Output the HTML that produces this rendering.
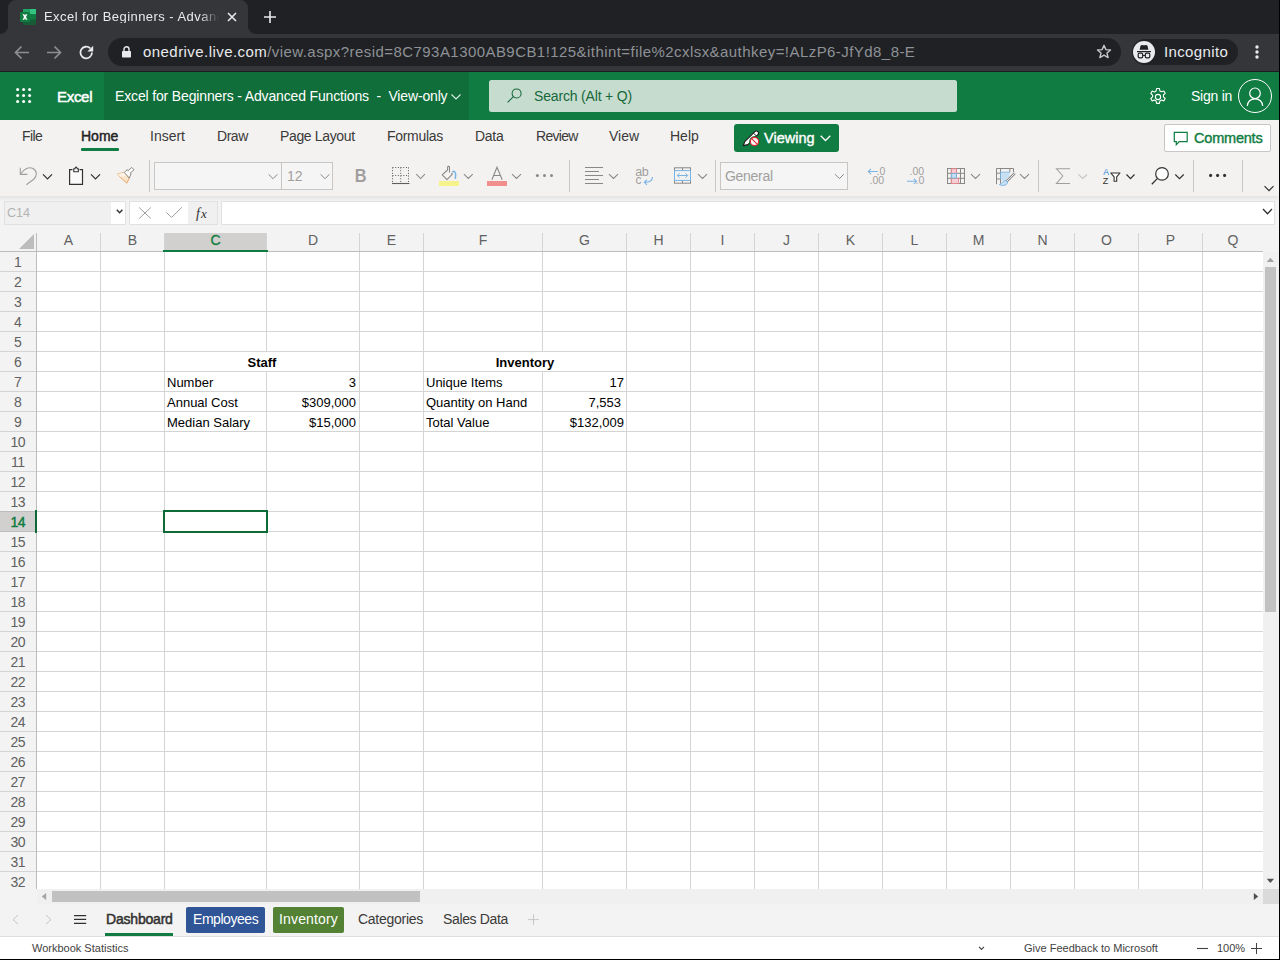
<!DOCTYPE html>
<html><head><meta charset="utf-8">
<style>
*{box-sizing:border-box;margin:0;padding:0}
html,body{width:1280px;height:960px;overflow:hidden;background:#fff}
body{position:relative;font-family:"Liberation Sans",sans-serif}
.a{position:absolute}
.t{position:absolute;white-space:nowrap;line-height:1}
svg{position:absolute;overflow:visible}
</style></head><body>

<!-- ============ CHROME ============ -->
<div class="a" style="left:0;top:0;width:1280px;height:72px;background:#202124"></div>
<!-- active tab -->
<div class="a" style="left:8px;top:0;width:240px;height:36px;background:#35363a;border-radius:8px 8px 0 0"></div>
<div class="a" style="left:0;top:26px;width:8px;height:8px;background:radial-gradient(circle at 0 0,#202124 7.5px,#35363a 8.5px)"></div>
<div class="a" style="left:248px;top:26px;width:8px;height:8px;background:radial-gradient(circle at 100% 0,#202124 7.5px,#35363a 8.5px)"></div>
<!-- toolbar -->
<div class="a" style="left:0;top:34px;width:1280px;height:37px;background:#35363a"></div>
<div class="a" style="left:0;top:71px;width:1280px;height:1px;background:#1d1e21"></div>
<!-- favicon -->
<svg style="left:20px;top:9px" width="17" height="16" viewBox="0 0 17 16">
<rect x="3" y="0" width="13" height="16" rx="1" fill="#185c37"/>
<rect x="3" y="0" width="13" height="5.3" fill="#21a366"/>
<rect x="10" y="0" width="6" height="5.3" fill="#33c481"/>
<rect x="3" y="5.3" width="13" height="5.3" fill="#107c41"/>
<rect x="0" y="3" width="10" height="10" rx="1" fill="#107c41"/>
<path d="M2.6 5.2 L4.3 5.2 L5 6.6 L5.7 5.2 L7.4 5.2 L6 8 L7.5 10.8 L5.8 10.8 L5 9.3 L4.2 10.8 L2.5 10.8 L4 8 Z" fill="#fff"/>
</svg>
<div class="t" style="left:44px;top:10px;font-size:13px;letter-spacing:0.45px;color:#e8eaed;width:176px;overflow:hidden;-webkit-mask-image:linear-gradient(90deg,#000 156px,transparent 175px)">Excel for Beginners - Advanced Functions</div>
<svg style="left:227px;top:12px" width="10" height="10" viewBox="0 0 10 10"><path d="M1 1L9 9M9 1L1 9" stroke="#e8eaed" stroke-width="1.6"/></svg>
<svg style="left:264px;top:11px" width="12" height="12" viewBox="0 0 12 12"><path d="M6 0V12M0 6H12" stroke="#e8eaed" stroke-width="1.6"/></svg>
<!-- nav -->
<svg style="left:14px;top:45px" width="15" height="15" viewBox="0 0 15 15"><path d="M15 7.5H2M7.5 1.5L1.5 7.5L7.5 13.5" stroke="#8c8e92" stroke-width="1.7" fill="none"/></svg>
<svg style="left:47px;top:45px" width="15" height="15" viewBox="0 0 15 15"><path d="M0 7.5H13M7.5 1.5L13.5 7.5L7.5 13.5" stroke="#8c8e92" stroke-width="1.7" fill="none"/></svg>
<svg style="left:79px;top:45px" width="15" height="15" viewBox="0 0 15 15"><path d="M13 7.5A5.8 5.8 0 1 1 11.3 3.4" stroke="#e8eaed" stroke-width="1.8" fill="none"/><path d="M14.2 0.8V6.6H8.4Z" fill="#e8eaed"/></svg>
<!-- omnibox -->
<div class="a" style="left:108px;top:38px;width:1013px;height:28px;background:#202124;border-radius:14px"></div>
<svg style="left:122px;top:46px" width="9" height="12" viewBox="0 0 9 12"><path d="M2 5V3.3A2.5 2.5 0 0 1 7 3.3V5" stroke="#e8eaed" stroke-width="1.4" fill="none"/><rect x="0" y="5" width="9" height="6.5" rx="0.8" fill="#e8eaed"/></svg>
<div class="t" id="url" style="left:143px;top:44px;font-size:15px;letter-spacing:0.44px;color:#8e9297"><span style="color:#e8eaed">onedrive.live.com</span>/view.aspx?resid=8C793A1300AB9CB1!125&amp;ithint=file%2cxlsx&amp;authkey=!ALzP6-JfYd8_8-E</div>
<svg style="left:1096px;top:44px" width="16" height="16" viewBox="0 0 16 16"><path d="M8 1.3L9.9 5.6L14.5 6L11 9.1L12.1 13.6L8 11.2L3.9 13.6L5 9.1L1.5 6L6.1 5.6Z" stroke="#c4c7ca" stroke-width="1.4" fill="none" stroke-linejoin="round"/></svg>
<!-- incognito -->
<div class="a" style="left:1132px;top:39px;width:106px;height:26px;background:#202124;border-radius:13px"></div>
<div class="a" style="left:1133px;top:41px;width:22px;height:22px;background:#e8eaed;border-radius:50%"></div>
<svg style="left:1133px;top:41px" width="22" height="22" viewBox="0 0 22 22"><path d="M6.6 8.8L7.6 4.6L9 3.9L10 4.3H12L13 3.9L14.4 4.6L15.4 8.8Z" fill="#202124"/><rect x="4" y="10" width="14" height="1.2" fill="#202124"/><rect x="5.2" y="12.2" width="4.5" height="4.6" rx="1.3" stroke="#202124" stroke-width="1.2" fill="none"/><rect x="12.3" y="12.2" width="4.5" height="4.6" rx="1.3" stroke="#202124" stroke-width="1.2" fill="none"/><path d="M9.7 14.5H12.3" stroke="#202124" stroke-width="1"/></svg>
<div class="t" id="incog" style="left:1164px;top:44px;font-size:15px;letter-spacing:0.37px;color:#e8eaed">Incognito</div>
<svg style="left:1255px;top:45px" width="4" height="14" viewBox="0 0 4 14"><circle cx="2" cy="2" r="1.7" fill="#e8eaed"/><circle cx="2" cy="7" r="1.7" fill="#e8eaed"/><circle cx="2" cy="12" r="1.7" fill="#e8eaed"/></svg>

<!-- ============ EXCEL HEADER ============ -->
<div class="a" style="left:0;top:72px;width:1280px;height:48px;background:#107c41"></div>
<div class="a" style="left:104px;top:72px;width:365px;height:48px;background:#0f6e3a"></div>
<svg style="left:16px;top:88px" width="16" height="16" viewBox="0 0 16 16" fill="#fff">
<circle cx="1.6" cy="1.6" r="1.5"/><circle cx="7.6" cy="1.6" r="1.5"/><circle cx="13.6" cy="1.6" r="1.5"/>
<circle cx="1.6" cy="7.6" r="1.5"/><circle cx="7.6" cy="7.6" r="1.5"/><circle cx="13.6" cy="7.6" r="1.5"/>
<circle cx="1.6" cy="13.6" r="1.5"/><circle cx="7.6" cy="13.6" r="1.5"/><circle cx="13.6" cy="13.6" r="1.5"/>
</svg>
<div class="t" id="xl" style="left:57px;top:89px;font-size:15px;letter-spacing:-0.3px;color:#fff;-webkit-text-stroke:0.5px #fff">Excel</div>
<div class="t" id="ttl" style="left:115px;top:89px;font-size:14px;letter-spacing:-0.15px;color:#fff">Excel for Beginners - Advanced Functions&nbsp; - &nbsp;View-only</div>
<svg style="left:451px;top:94px" width="10" height="6" viewBox="0 0 10 6"><path d="M0.5 0.5L5 5L9.5 0.5" stroke="#e0efe6" stroke-width="1.1" fill="none"/></svg>
<!-- search -->
<div class="a" style="left:489px;top:80px;width:468px;height:32px;background:#c6dccf;border-radius:2.5px"></div>
<svg style="left:507px;top:88px" width="16" height="16" viewBox="0 0 16 16"><circle cx="9.6" cy="5.4" r="4.5" stroke="#17683b" stroke-width="1.05" fill="none"/><path d="M6.4 8.6L0.6 14.4" stroke="#17683b" stroke-width="1.1"/></svg>
<div class="t" id="srch" style="left:534px;top:89px;font-size:14px;letter-spacing:-0.17px;color:#17683b">Search (Alt + Q)</div>
<!-- right -->
<svg style="left:1148px;top:87px" width="20" height="20" viewBox="0 0 20 20"><path d="M8.6 1.5h2.8l.5 2.4 1.6.9 2.3-.8 1.4 2.4-1.8 1.6v1.9l1.8 1.6-1.4 2.4-2.3-.8-1.6.9-.5 2.4H8.6l-.5-2.4-1.6-.9-2.3.8-1.4-2.4 1.8-1.6V8.1L2.8 6.5l1.4-2.4 2.3.8 1.6-.9z" stroke="#fff" stroke-width="1.1" fill="none" stroke-linejoin="round"/><circle cx="10" cy="10" r="2.6" stroke="#fff" stroke-width="1.1" fill="none"/></svg>
<div class="t" id="sign" style="left:1191px;top:89px;font-size:14px;letter-spacing:-0.25px;color:#fff">Sign in</div>
<svg style="left:1238px;top:79px" width="34" height="34" viewBox="0 0 34 34"><circle cx="17" cy="17" r="16.5" stroke="#fff" stroke-width="1" fill="none"/><circle cx="17" cy="14.3" r="5.3" stroke="#fff" stroke-width="1.2" fill="none"/><path d="M9.3 27C9.8 22 12.5 19.8 17 19.8S24.2 22 24.7 27" stroke="#fff" stroke-width="1.2" fill="none"/></svg>

<!-- ============ RIBBON ============ -->
<div class="a" style="left:0;top:120px;width:1280px;height:76px;background:#f3f2f1"></div>
<div class="a" style="left:0;top:196px;width:1280px;height:4px;background:linear-gradient(#e6e5e4,#f3f2f1)"></div>
<div class="a" style="left:0;top:200px;width:1280px;height:33px;background:#f3f2f1"></div>
<div class="t" id="rt1" style="left:22px;top:129px;font-size:14px;color:#3b3a39;letter-spacing:-0.6px">File</div>
<div class="t" id="rt2" style="left:81px;top:129px;font-size:14px;color:#242424;-webkit-text-stroke:0.45px #242424">Home</div>
<div class="a" style="left:81px;top:148px;width:38px;height:3px;background:#107c41;border-radius:1px"></div>
<div class="t" id="rt3" style="left:150px;top:129px;font-size:14px;color:#3b3a39">Insert</div>
<div class="t" id="rt4" style="left:217px;top:129px;font-size:14px;color:#3b3a39;letter-spacing:-0.45px">Draw</div>
<div class="t" id="rt5" style="left:280px;top:129px;font-size:14px;color:#3b3a39;letter-spacing:-0.35px">Page Layout</div>
<div class="t" id="rt6" style="left:387px;top:129px;font-size:14px;color:#3b3a39;letter-spacing:-0.3px">Formulas</div>
<div class="t" id="rt7" style="left:475px;top:129px;font-size:14px;color:#3b3a39;letter-spacing:-0.3px">Data</div>
<div class="t" id="rt8" style="left:536px;top:129px;font-size:14px;color:#3b3a39;letter-spacing:-0.7px">Review</div>
<div class="t" id="rt9" style="left:609px;top:129px;font-size:14px;color:#3b3a39">View</div>
<div class="t" id="rt10" style="left:670px;top:129px;font-size:14px;color:#3b3a39">Help</div>
<!-- viewing btn -->
<div class="a" style="left:734px;top:124px;width:105px;height:28px;background:#107c41;border-radius:3px"></div>
<svg style="left:742px;top:130px" width="18" height="18" viewBox="0 0 18 18"><path d="M1.3 15.6L2.8 11.6L12.9 1.6A2.05 2.05 0 0 1 15.9 4.6L5.9 14.6Z" stroke="#1b1b1b" stroke-width="1.1" fill="#fff" stroke-linejoin="round"/><path d="M11.6 3.2L14.4 6" stroke="#1b1b1b" stroke-width="1"/><circle cx="12.5" cy="11.5" r="5.4" fill="#107c41"/><circle cx="12.5" cy="11.5" r="4.1" fill="#f8f8f8" stroke="#e8202a" stroke-width="1.1"/><path d="M9.6 8.6L15.4 14.4" stroke="#e8202a" stroke-width="1.1"/></svg>
<div class="t" id="view" style="left:764px;top:131px;font-size:14.5px;color:#fff;-webkit-text-stroke:0.4px #fff">Viewing</div>
<svg style="left:820px;top:135px" width="11" height="7" viewBox="0 0 11 7"><path d="M0.7 0.7L5.5 5.5L10.3 0.7" stroke="#fff" stroke-width="1.3" fill="none"/></svg>
<!-- comments btn -->
<div class="a" style="left:1164px;top:124px;width:107px;height:28px;background:#fff;border:1px solid #c8c6c4;border-radius:2px"></div>
<svg style="left:1173px;top:131px" width="16" height="16" viewBox="0 0 16 16"><path d="M1.3 1.3H14.2V10.6H6.2L3.3 13.7V10.6H1.3Z" stroke="#107c41" stroke-width="1.2" fill="none" stroke-linejoin="miter"/></svg>
<div class="t" id="cmt" style="left:1194px;top:131px;font-size:14.5px;letter-spacing:-0.2px;color:#107c41;-webkit-text-stroke:0.4px #107c41">Comments</div>

<!-- toolbar row -->
<div class="a" style="left:154px;top:162px;width:179px;height:28px;background:#f5f5f5;border:1px solid #c8c6c4"></div>
<div class="a" style="left:281px;top:162px;width:1px;height:28px;background:#c8c6c4"></div>
<div class="a" style="left:720px;top:162px;width:128px;height:28px;background:#f5f5f5;border:1px solid #c8c6c4"></div>
<div class="t" id="gen" style="left:725px;top:169px;font-size:14px;letter-spacing:-0.3px;color:#a19f9d">General</div>
<div class="t" id="twelve" style="left:287px;top:169px;font-size:14px;color:#a19f9d">12</div>
<svg style="left:0;top:0" width="1280" height="200" viewBox="0 0 1280 200" fill="none" stroke-width="1.1">
<g stroke="#c8c6c4" stroke-width="1"><path d="M149.5 160V192M569.5 160V192M715.5 160V192M1038.5 160V192M1193.5 160V192M1242.5 160V192"/></g>
<!-- undo -->
<path d="M20.3 167.7V174.4H27.5" stroke="#a19f9d" stroke-width="1.1"/>
<path d="M20.6 174C24 168.5 29 166.5 33 168.5C37.5 171 37 176 34 179L26.3 184.7" stroke="#a19f9d" stroke-width="1.1"/>
<!-- chevrons dark -->
<g stroke="#323130" stroke-width="1.2"><path d="M43 174.3L47.5 178.8L52 174.3M91 174.3L95.5 178.8L100 174.3M1126.5 174.5L1130.5 178.7L1134.5 174.5M1175.3 174.5L1179.5 178.7L1183.7 174.5M1264.5 186.2L1269 190.7L1273.5 186.2"/></g>
<!-- clipboard -->
<path d="M72.5 169.6H69.6V184.3H82.5V169.6H79.5" stroke="#323130" stroke-width="1.2" fill="#fafafa"/>
<path d="M73.8 171.8V168.8H75C75.2 167.6 75.8 167.1 76.1 167.1S77 167.6 77.2 168.8H78.3V171.8Z" stroke="#323130" stroke-width="1.1" fill="#fff"/>
<!-- format painter -->
<path d="M117.2 174.2L124.3 172.4L129.3 178.1L126.8 183.2Z" stroke="#e8a56b" stroke-width="1" fill="#fbe5c9"/>
<path d="M117.2 174.2L124.3 172.4L127 175.5L120.5 177Z" fill="#fdf3e6" stroke="none"/>
<path d="M124.3 172.4L127.3 169.6L131 173.8L129.3 178.1Z" stroke="#8a8886" stroke-width="1" fill="#fff"/>
<path d="M127.7 171L131.8 167.4L134 169.8L130 173.3" stroke="#8a8886" stroke-width="1" fill="#fff"/>
<!-- font box chevrons -->
<g stroke="#8a8886" stroke-width="1"><path d="M268.6 174.3L273 178.7L277.4 174.3M320.6 174.3L325 178.7L329.4 174.3M835 174.2L839.4 178.6L843.8 174.2"/></g>
<!-- B -->
<text x="354.8" y="182" font-family="Liberation Sans" font-weight="bold" font-size="19" fill="#a19f9d" stroke="none" textLength="11.8" lengthAdjust="spacingAndGlyphs">B</text>
<!-- borders -->
<g stroke="#605e5c" stroke-width="1" stroke-dasharray="1 1.7"><path d="M392.5 167.5H409M392.5 175.5H409M392.5 167.5V183M400.7 167.5V183M408.5 167.5V183"/></g>
<path d="M392 183.5H409.5" stroke="#605e5c" stroke-width="1.1"/>
<!-- light chevrons -->
<g stroke="#8a8886" stroke-width="1.05"><path d="M416.3 174.2L420.6 178.5L424.9 174.2M463.9 174.2L468.3 178.5L472.7 174.2M512 174.2L516.5 178.5L521 174.2M609 174.2L613.5 178.5L618 174.2M698 174.2L702.5 178.5L707 174.2M971 174.2L975.5 178.5L980 174.2M1020 174.2L1024.5 178.5L1029 174.2"/></g>
<path d="M1078.5 174.5L1082.7 178.5L1087 174.5" stroke="#c8c6c4" stroke-width="1.05"/>
<!-- fill color -->
<rect x="439" y="181" width="20" height="5" fill="#f6f38c" stroke="none"/>
<path d="M447.5 170L442.2 174.8L447 179.6L452.4 174.2L451.3 173" stroke="#8a8886" stroke-width="1.05" stroke-linejoin="round"/>
<path d="M447.6 170.3V167.3A0.95 0.95 0 0 1 449.5 167.3V172.6" stroke="#8a8886" stroke-width="1.05"/>
<path d="M452.3 172.2C453.8 170.6 455.6 171.5 455.6 174C455.6 176 455.5 177.3 455.3 178.8" stroke="#78b4e4" stroke-width="1.5"/>
<!-- font color -->
<rect x="487" y="181" width="20" height="5" fill="#f38e8e" stroke="none"/>
<path d="M491.9 179.8L497 167.2L502.2 179.8M493.6 175.5H500.4" stroke="#8a8886" stroke-width="1.05"/>
<!-- dots -->
<g fill="#8a8886" stroke="none"><circle cx="537.4" cy="175.4" r="1.5"/><circle cx="544.5" cy="175.4" r="1.5"/><circle cx="551.5" cy="175.4" r="1.5"/></g>
<g fill="#323130" stroke="none"><circle cx="1210.6" cy="175.4" r="1.55"/><circle cx="1217.6" cy="175.4" r="1.55"/><circle cx="1224.6" cy="175.4" r="1.55"/></g>
<!-- align -->
<g stroke="#8a8886" stroke-width="1.05"><path d="M585 167.4H603M585 171.4H599M585 175.4H603M585 179.4H599M585 183.4H603"/></g>
<!-- wrap -->
<text x="635.3" y="175.8" font-family="Liberation Sans" font-size="12.5" fill="#a19f9d" stroke="none" letter-spacing="-0.4">ab</text>
<text x="635.5" y="184.3" font-family="Liberation Sans" font-size="12" fill="#a19f9d" stroke="none">c</text>
<path d="M652.5 177C652.5 180.5 649.5 182.5 644.5 182.3M647 179.7L644.3 182.3L647 184.9" stroke="#78b4e4" stroke-width="1.1"/>
<!-- merge -->
<rect x="674.5" y="167.8" width="16" height="15.4" stroke="#8a8886" stroke-width="1"/>
<path d="M682.5 167.8V170.6M682.5 180.4V183.2" stroke="#8a8886" stroke-width="1"/>
<rect x="674.5" y="170.6" width="16" height="9.8" stroke="#78b4e4" stroke-width="1" fill="#f3f2f1"/>
<path d="M677.5 175.5H687.5M679.5 173.3L677.3 175.5L679.5 177.7M685.5 173.3L687.7 175.5L685.5 177.7" stroke="#78b4e4" stroke-width="1"/>
<!-- decimals -->
<text x="876.5" y="174.8" font-family="Liberation Sans" font-size="10.5" fill="#a19f9d" stroke="none">.0</text>
<text x="869.5" y="184.3" font-family="Liberation Sans" font-size="10.5" fill="#a19f9d" stroke="none">.00</text>
<path d="M877.8 171.5H868.3M871 168.8L868.3 171.5L871 174.2" stroke="#78b4e4" stroke-width="1.05"/>
<text x="909.5" y="174.8" font-family="Liberation Sans" font-size="10.5" fill="#a19f9d" stroke="none">.00</text>
<text x="915.5" y="184.3" font-family="Liberation Sans" font-size="10.5" fill="#a19f9d" stroke="none">.0</text>
<path d="M907 181.3H916.5M913.8 178.6L916.5 181.3L913.8 184" stroke="#78b4e4" stroke-width="1.05"/>
<!-- conditional formatting -->
<g stroke="#8a8886" stroke-width="1"><rect x="947.5" y="168.5" width="17" height="15"/><path d="M951.3 168.5V183.5M956.5 168.5V183.5M960.5 168.5V183.5M947.5 173.3H964.5M947.5 178.3H964.5"/></g>
<rect x="951.6" y="168.8" width="4.8" height="4.4" fill="#f6d0d5" stroke="#e8838b" stroke-width="0.9"/>
<rect x="951.6" y="178.4" width="7" height="5" fill="#f6d0d5" stroke="#e8838b" stroke-width="0.9"/>
<rect x="951.6" y="173.6" width="4.8" height="4.4" fill="#c7e0f4" stroke="#78b4e4" stroke-width="0.9"/>
<!-- format as table -->
<path d="M996.5 184.2V168.5H1013.5V172M1000.5 168.5V184.2M1009.8 168.5V172.5M996.5 173.2H1000.5M996.5 179H1000.5" stroke="#8a8886" stroke-width="1"/>
<path d="M1000.8 179.5V172.3H1009.8" stroke="#78b4e4" stroke-width="1.1" fill="none"/>
<path d="M1001.3 172.8H1009.5V176.5L1005.5 180.5H1001.3Z" fill="#c7e0f4" stroke="none"/>
<path d="M1014.8 173.2L1006.2 181.8" stroke="#8a8886" stroke-width="2.4"/>
<path d="M1014.8 173.2L1006.2 181.8" stroke="#f3f2f1" stroke-width="0.9"/>
<path d="M1005.8 180.6C1007.8 181 1008 183 1006.6 184.3C1005 185.8 1001.5 185.8 999.3 184.6C1001.8 184 1002.8 180.3 1005.8 180.6Z" fill="#c7e0f4" stroke="#78b4e4" stroke-width="0.9"/>
<!-- sigma -->
<path d="M1070 168.8H1056.5L1062.8 176L1056.5 183.4H1070" stroke="#a19f9d" stroke-width="1.05"/>
<!-- sort filter -->
<text x="1103.3" y="174.6" font-family="Liberation Sans" font-size="8.5" fill="#2b88d8" stroke="none">A</text>
<text x="1102.8" y="184.2" font-family="Liberation Sans" font-size="9" fill="#323130" stroke="none">Z</text>
<path d="M1110.8 173H1120L1116.7 176.8V181.3H1114.1V176.8Z" stroke="#323130" stroke-width="1.1" fill="#fff" stroke-linejoin="round"/>
<!-- find -->
<circle cx="1162" cy="173.9" r="6.3" stroke="#323130" stroke-width="1.2" fill="#fff"/>
<path d="M1157.5 178.4L1151.8 184.2" stroke="#323130" stroke-width="1.3"/>
</svg>

<!-- ============ FORMULA BAR ============ -->
<div class="a" style="left:0;top:200px;width:1280px;height:33px;background:#f3f3f3"></div>
<div class="a" style="left:0;top:196px;width:1280px;height:5px;background:linear-gradient(#e3e3e3,#f3f3f3)"></div>
<div class="a" style="left:4px;top:201px;width:122px;height:24px;background:#f0f0f0;border:1px solid #e1e1e1"></div>
<div class="a" style="left:111px;top:202px;width:14px;height:22px;background:#fff"></div>
<div class="t" id="nbox" style="left:7px;top:207px;font-size:12.5px;color:#b3b3b3">C14</div>
<div class="a" style="left:129px;top:201px;width:89px;height:24px;background:#f0f0f0;border:1px solid #e1e1e1"></div>
<div class="a" style="left:130px;top:202px;width:58px;height:22px;background:#fff"></div>
<div class="a" style="left:221px;top:201px;width:1054px;height:24px;background:#fff;border:1px solid #e1e1e1"></div>
<svg style="left:0;top:0" width="1280" height="240" viewBox="0 0 1280 240" fill="none">
<path d="M116.8 209.8L119.6 212.8L122.4 209.8" stroke="#323130" stroke-width="1.4"/>
<path d="M139.2 207.5L150.8 218.5M150.8 207.5L139.2 218.5" stroke="#a19f9d" stroke-width="1"/>
<path d="M166.3 212.3L171.5 217.5L181.8 207.3" stroke="#a19f9d" stroke-width="1"/>
<path d="M1263 209L1267.5 213.8L1272 209" stroke="#323130" stroke-width="1.3"/>
<text x="196" y="217.5" font-family="Liberation Serif" font-style="italic" font-size="14" fill="#323130">f</text>
<text x="201" y="217.5" font-family="Liberation Serif" font-style="italic" font-size="13" fill="#323130">x</text>
</svg>

<!-- ============ GRID ============ -->
<div class="a" style="left:0;top:233px;width:1279px;height:19px;background:#f3f3f3"></div>
<div class="a" style="left:0;top:252px;width:36px;height:637px;background:#f3f3f3"></div>
<div class="a" style="left:37px;top:252px;width:1226px;height:637px;background:#fff"></div>
<div class="a" style="left:165px;top:233px;width:101px;height:17px;background:#d2d0ce"></div>
<div class="a" style="left:0;top:512px;width:35px;height:19px;background:#d2d0ce"></div>
<svg style="left:19px;top:234px" width="15" height="15" viewBox="0 0 15 15"><path d="M15 0V15H0Z" fill="#bdbdbd"/></svg>
<div class="a" style="left:100px;top:233px;width:1px;height:18px;background:#d4d4d4"></div>
<div class="a" style="left:164px;top:233px;width:1px;height:18px;background:#d4d4d4"></div>
<div class="a" style="left:266px;top:233px;width:1px;height:18px;background:#d4d4d4"></div>
<div class="a" style="left:359px;top:233px;width:1px;height:18px;background:#d4d4d4"></div>
<div class="a" style="left:423px;top:233px;width:1px;height:18px;background:#d4d4d4"></div>
<div class="a" style="left:542px;top:233px;width:1px;height:18px;background:#d4d4d4"></div>
<div class="a" style="left:626px;top:233px;width:1px;height:18px;background:#d4d4d4"></div>
<div class="a" style="left:690px;top:233px;width:1px;height:18px;background:#d4d4d4"></div>
<div class="a" style="left:754px;top:233px;width:1px;height:18px;background:#d4d4d4"></div>
<div class="a" style="left:818px;top:233px;width:1px;height:18px;background:#d4d4d4"></div>
<div class="a" style="left:882px;top:233px;width:1px;height:18px;background:#d4d4d4"></div>
<div class="a" style="left:946px;top:233px;width:1px;height:18px;background:#d4d4d4"></div>
<div class="a" style="left:1010px;top:233px;width:1px;height:18px;background:#d4d4d4"></div>
<div class="a" style="left:1074px;top:233px;width:1px;height:18px;background:#d4d4d4"></div>
<div class="a" style="left:1138px;top:233px;width:1px;height:18px;background:#d4d4d4"></div>
<div class="a" style="left:1202px;top:233px;width:1px;height:18px;background:#d4d4d4"></div>
<div class="a" style="left:0;top:251px;width:1263px;height:1px;background:#bdbdbd"></div>
<div class="a" style="left:36px;top:233px;width:1px;height:656px;background:#bdbdbd"></div>
<div class="a" style="left:100px;top:252px;width:1px;height:637px;background:#d4d4d4"></div>
<div class="a" style="left:164px;top:252px;width:1px;height:637px;background:#d4d4d4"></div>
<div class="a" style="left:266px;top:252px;width:1px;height:637px;background:#d4d4d4"></div>
<div class="a" style="left:359px;top:252px;width:1px;height:637px;background:#d4d4d4"></div>
<div class="a" style="left:423px;top:252px;width:1px;height:637px;background:#d4d4d4"></div>
<div class="a" style="left:542px;top:252px;width:1px;height:637px;background:#d4d4d4"></div>
<div class="a" style="left:626px;top:252px;width:1px;height:637px;background:#d4d4d4"></div>
<div class="a" style="left:690px;top:252px;width:1px;height:637px;background:#d4d4d4"></div>
<div class="a" style="left:754px;top:252px;width:1px;height:637px;background:#d4d4d4"></div>
<div class="a" style="left:818px;top:252px;width:1px;height:637px;background:#d4d4d4"></div>
<div class="a" style="left:882px;top:252px;width:1px;height:637px;background:#d4d4d4"></div>
<div class="a" style="left:946px;top:252px;width:1px;height:637px;background:#d4d4d4"></div>
<div class="a" style="left:1010px;top:252px;width:1px;height:637px;background:#d4d4d4"></div>
<div class="a" style="left:1074px;top:252px;width:1px;height:637px;background:#d4d4d4"></div>
<div class="a" style="left:1138px;top:252px;width:1px;height:637px;background:#d4d4d4"></div>
<div class="a" style="left:1202px;top:252px;width:1px;height:637px;background:#d4d4d4"></div>
<div class="a" style="left:0;top:271px;width:36px;height:1px;background:#d4d4d4"></div>
<div class="a" style="left:37px;top:271px;width:1226px;height:1px;background:#d4d4d4"></div>
<div class="a" style="left:0;top:291px;width:36px;height:1px;background:#d4d4d4"></div>
<div class="a" style="left:37px;top:291px;width:1226px;height:1px;background:#d4d4d4"></div>
<div class="a" style="left:0;top:311px;width:36px;height:1px;background:#d4d4d4"></div>
<div class="a" style="left:37px;top:311px;width:1226px;height:1px;background:#d4d4d4"></div>
<div class="a" style="left:0;top:331px;width:36px;height:1px;background:#d4d4d4"></div>
<div class="a" style="left:37px;top:331px;width:1226px;height:1px;background:#d4d4d4"></div>
<div class="a" style="left:0;top:351px;width:36px;height:1px;background:#d4d4d4"></div>
<div class="a" style="left:37px;top:351px;width:1226px;height:1px;background:#d4d4d4"></div>
<div class="a" style="left:0;top:371px;width:36px;height:1px;background:#d4d4d4"></div>
<div class="a" style="left:37px;top:371px;width:1226px;height:1px;background:#d4d4d4"></div>
<div class="a" style="left:0;top:391px;width:36px;height:1px;background:#d4d4d4"></div>
<div class="a" style="left:37px;top:391px;width:1226px;height:1px;background:#d4d4d4"></div>
<div class="a" style="left:0;top:411px;width:36px;height:1px;background:#d4d4d4"></div>
<div class="a" style="left:37px;top:411px;width:1226px;height:1px;background:#d4d4d4"></div>
<div class="a" style="left:0;top:431px;width:36px;height:1px;background:#d4d4d4"></div>
<div class="a" style="left:37px;top:431px;width:1226px;height:1px;background:#d4d4d4"></div>
<div class="a" style="left:0;top:451px;width:36px;height:1px;background:#d4d4d4"></div>
<div class="a" style="left:37px;top:451px;width:1226px;height:1px;background:#d4d4d4"></div>
<div class="a" style="left:0;top:471px;width:36px;height:1px;background:#d4d4d4"></div>
<div class="a" style="left:37px;top:471px;width:1226px;height:1px;background:#d4d4d4"></div>
<div class="a" style="left:0;top:491px;width:36px;height:1px;background:#d4d4d4"></div>
<div class="a" style="left:37px;top:491px;width:1226px;height:1px;background:#d4d4d4"></div>
<div class="a" style="left:0;top:511px;width:36px;height:1px;background:#d4d4d4"></div>
<div class="a" style="left:37px;top:511px;width:1226px;height:1px;background:#d4d4d4"></div>
<div class="a" style="left:0;top:531px;width:36px;height:1px;background:#d4d4d4"></div>
<div class="a" style="left:37px;top:531px;width:1226px;height:1px;background:#d4d4d4"></div>
<div class="a" style="left:0;top:551px;width:36px;height:1px;background:#d4d4d4"></div>
<div class="a" style="left:37px;top:551px;width:1226px;height:1px;background:#d4d4d4"></div>
<div class="a" style="left:0;top:571px;width:36px;height:1px;background:#d4d4d4"></div>
<div class="a" style="left:37px;top:571px;width:1226px;height:1px;background:#d4d4d4"></div>
<div class="a" style="left:0;top:591px;width:36px;height:1px;background:#d4d4d4"></div>
<div class="a" style="left:37px;top:591px;width:1226px;height:1px;background:#d4d4d4"></div>
<div class="a" style="left:0;top:611px;width:36px;height:1px;background:#d4d4d4"></div>
<div class="a" style="left:37px;top:611px;width:1226px;height:1px;background:#d4d4d4"></div>
<div class="a" style="left:0;top:631px;width:36px;height:1px;background:#d4d4d4"></div>
<div class="a" style="left:37px;top:631px;width:1226px;height:1px;background:#d4d4d4"></div>
<div class="a" style="left:0;top:651px;width:36px;height:1px;background:#d4d4d4"></div>
<div class="a" style="left:37px;top:651px;width:1226px;height:1px;background:#d4d4d4"></div>
<div class="a" style="left:0;top:671px;width:36px;height:1px;background:#d4d4d4"></div>
<div class="a" style="left:37px;top:671px;width:1226px;height:1px;background:#d4d4d4"></div>
<div class="a" style="left:0;top:691px;width:36px;height:1px;background:#d4d4d4"></div>
<div class="a" style="left:37px;top:691px;width:1226px;height:1px;background:#d4d4d4"></div>
<div class="a" style="left:0;top:711px;width:36px;height:1px;background:#d4d4d4"></div>
<div class="a" style="left:37px;top:711px;width:1226px;height:1px;background:#d4d4d4"></div>
<div class="a" style="left:0;top:731px;width:36px;height:1px;background:#d4d4d4"></div>
<div class="a" style="left:37px;top:731px;width:1226px;height:1px;background:#d4d4d4"></div>
<div class="a" style="left:0;top:751px;width:36px;height:1px;background:#d4d4d4"></div>
<div class="a" style="left:37px;top:751px;width:1226px;height:1px;background:#d4d4d4"></div>
<div class="a" style="left:0;top:771px;width:36px;height:1px;background:#d4d4d4"></div>
<div class="a" style="left:37px;top:771px;width:1226px;height:1px;background:#d4d4d4"></div>
<div class="a" style="left:0;top:791px;width:36px;height:1px;background:#d4d4d4"></div>
<div class="a" style="left:37px;top:791px;width:1226px;height:1px;background:#d4d4d4"></div>
<div class="a" style="left:0;top:811px;width:36px;height:1px;background:#d4d4d4"></div>
<div class="a" style="left:37px;top:811px;width:1226px;height:1px;background:#d4d4d4"></div>
<div class="a" style="left:0;top:831px;width:36px;height:1px;background:#d4d4d4"></div>
<div class="a" style="left:37px;top:831px;width:1226px;height:1px;background:#d4d4d4"></div>
<div class="a" style="left:0;top:851px;width:36px;height:1px;background:#d4d4d4"></div>
<div class="a" style="left:37px;top:851px;width:1226px;height:1px;background:#d4d4d4"></div>
<div class="a" style="left:0;top:871px;width:36px;height:1px;background:#d4d4d4"></div>
<div class="a" style="left:37px;top:871px;width:1226px;height:1px;background:#d4d4d4"></div>
<div class="a" style="left:266px;top:352px;width:1px;height:19px;background:#fff"></div>
<div class="a" style="left:542px;top:352px;width:1px;height:19px;background:#fff"></div>
<div class="t" style="left:37px;top:233px;width:63px;text-align:center;font-size:14px;color:#616161">A</div>
<div class="t" style="left:101px;top:233px;width:63px;text-align:center;font-size:14px;color:#616161">B</div>
<div class="t" style="left:165px;top:233px;width:101px;text-align:center;font-size:14px;color:#107c41;-webkit-text-stroke:0.35px #107c41">C</div>
<div class="t" style="left:267px;top:233px;width:92px;text-align:center;font-size:14px;color:#616161">D</div>
<div class="t" style="left:360px;top:233px;width:63px;text-align:center;font-size:14px;color:#616161">E</div>
<div class="t" style="left:424px;top:233px;width:118px;text-align:center;font-size:14px;color:#616161">F</div>
<div class="t" style="left:543px;top:233px;width:83px;text-align:center;font-size:14px;color:#616161">G</div>
<div class="t" style="left:627px;top:233px;width:63px;text-align:center;font-size:14px;color:#616161">H</div>
<div class="t" style="left:691px;top:233px;width:63px;text-align:center;font-size:14px;color:#616161">I</div>
<div class="t" style="left:755px;top:233px;width:63px;text-align:center;font-size:14px;color:#616161">J</div>
<div class="t" style="left:819px;top:233px;width:63px;text-align:center;font-size:14px;color:#616161">K</div>
<div class="t" style="left:883px;top:233px;width:63px;text-align:center;font-size:14px;color:#616161">L</div>
<div class="t" style="left:947px;top:233px;width:63px;text-align:center;font-size:14px;color:#616161">M</div>
<div class="t" style="left:1011px;top:233px;width:63px;text-align:center;font-size:14px;color:#616161">N</div>
<div class="t" style="left:1075px;top:233px;width:63px;text-align:center;font-size:14px;color:#616161">O</div>
<div class="t" style="left:1139px;top:233px;width:63px;text-align:center;font-size:14px;color:#616161">P</div>
<div class="t" style="left:1203px;top:233px;width:60px;text-align:center;font-size:14px;color:#616161">Q</div>
<div class="t" style="left:0;top:255px;width:36px;text-align:center;font-size:14px;letter-spacing:-0.6px;text-indent:-0.6px;color:#616161">1</div>
<div class="t" style="left:0;top:275px;width:36px;text-align:center;font-size:14px;letter-spacing:-0.6px;text-indent:-0.6px;color:#616161">2</div>
<div class="t" style="left:0;top:295px;width:36px;text-align:center;font-size:14px;letter-spacing:-0.6px;text-indent:-0.6px;color:#616161">3</div>
<div class="t" style="left:0;top:315px;width:36px;text-align:center;font-size:14px;letter-spacing:-0.6px;text-indent:-0.6px;color:#616161">4</div>
<div class="t" style="left:0;top:335px;width:36px;text-align:center;font-size:14px;letter-spacing:-0.6px;text-indent:-0.6px;color:#616161">5</div>
<div class="t" style="left:0;top:355px;width:36px;text-align:center;font-size:14px;letter-spacing:-0.6px;text-indent:-0.6px;color:#616161">6</div>
<div class="t" style="left:0;top:375px;width:36px;text-align:center;font-size:14px;letter-spacing:-0.6px;text-indent:-0.6px;color:#616161">7</div>
<div class="t" style="left:0;top:395px;width:36px;text-align:center;font-size:14px;letter-spacing:-0.6px;text-indent:-0.6px;color:#616161">8</div>
<div class="t" style="left:0;top:415px;width:36px;text-align:center;font-size:14px;letter-spacing:-0.6px;text-indent:-0.6px;color:#616161">9</div>
<div class="t" style="left:0;top:435px;width:36px;text-align:center;font-size:14px;letter-spacing:-0.6px;text-indent:-0.6px;color:#616161">10</div>
<div class="t" style="left:0;top:455px;width:36px;text-align:center;font-size:14px;letter-spacing:-0.6px;text-indent:-0.6px;color:#616161">11</div>
<div class="t" style="left:0;top:475px;width:36px;text-align:center;font-size:14px;letter-spacing:-0.6px;text-indent:-0.6px;color:#616161">12</div>
<div class="t" style="left:0;top:495px;width:36px;text-align:center;font-size:14px;letter-spacing:-0.6px;text-indent:-0.6px;color:#616161">13</div>
<div class="t" style="left:0;top:515px;width:36px;text-align:center;font-size:14px;letter-spacing:-0.6px;text-indent:-0.6px;color:#107c41;-webkit-text-stroke:0.45px #107c41">14</div>
<div class="t" style="left:0;top:535px;width:36px;text-align:center;font-size:14px;letter-spacing:-0.6px;text-indent:-0.6px;color:#616161">15</div>
<div class="t" style="left:0;top:555px;width:36px;text-align:center;font-size:14px;letter-spacing:-0.6px;text-indent:-0.6px;color:#616161">16</div>
<div class="t" style="left:0;top:575px;width:36px;text-align:center;font-size:14px;letter-spacing:-0.6px;text-indent:-0.6px;color:#616161">17</div>
<div class="t" style="left:0;top:595px;width:36px;text-align:center;font-size:14px;letter-spacing:-0.6px;text-indent:-0.6px;color:#616161">18</div>
<div class="t" style="left:0;top:615px;width:36px;text-align:center;font-size:14px;letter-spacing:-0.6px;text-indent:-0.6px;color:#616161">19</div>
<div class="t" style="left:0;top:635px;width:36px;text-align:center;font-size:14px;letter-spacing:-0.6px;text-indent:-0.6px;color:#616161">20</div>
<div class="t" style="left:0;top:655px;width:36px;text-align:center;font-size:14px;letter-spacing:-0.6px;text-indent:-0.6px;color:#616161">21</div>
<div class="t" style="left:0;top:675px;width:36px;text-align:center;font-size:14px;letter-spacing:-0.6px;text-indent:-0.6px;color:#616161">22</div>
<div class="t" style="left:0;top:695px;width:36px;text-align:center;font-size:14px;letter-spacing:-0.6px;text-indent:-0.6px;color:#616161">23</div>
<div class="t" style="left:0;top:715px;width:36px;text-align:center;font-size:14px;letter-spacing:-0.6px;text-indent:-0.6px;color:#616161">24</div>
<div class="t" style="left:0;top:735px;width:36px;text-align:center;font-size:14px;letter-spacing:-0.6px;text-indent:-0.6px;color:#616161">25</div>
<div class="t" style="left:0;top:755px;width:36px;text-align:center;font-size:14px;letter-spacing:-0.6px;text-indent:-0.6px;color:#616161">26</div>
<div class="t" style="left:0;top:775px;width:36px;text-align:center;font-size:14px;letter-spacing:-0.6px;text-indent:-0.6px;color:#616161">27</div>
<div class="t" style="left:0;top:795px;width:36px;text-align:center;font-size:14px;letter-spacing:-0.6px;text-indent:-0.6px;color:#616161">28</div>
<div class="t" style="left:0;top:815px;width:36px;text-align:center;font-size:14px;letter-spacing:-0.6px;text-indent:-0.6px;color:#616161">29</div>
<div class="t" style="left:0;top:835px;width:36px;text-align:center;font-size:14px;letter-spacing:-0.6px;text-indent:-0.6px;color:#616161">30</div>
<div class="t" style="left:0;top:855px;width:36px;text-align:center;font-size:14px;letter-spacing:-0.6px;text-indent:-0.6px;color:#616161">31</div>
<div class="t" style="left:0;top:875px;width:36px;text-align:center;font-size:14px;letter-spacing:-0.6px;text-indent:-0.6px;color:#616161">32</div>
<div class="a" style="left:0;top:511px;width:35px;height:1px;background:#bdbdbd"></div>
<div class="a" style="left:0;top:531px;width:35px;height:1px;background:#bdbdbd"></div>
<div class="a" style="left:163px;top:510px;width:105px;height:23px;border:2px solid #0e6b37"></div>
<div class="a" style="left:163px;top:250px;width:105px;height:2px;background:#107c41"></div>
<div class="a" style="left:35px;top:510px;width:2px;height:23px;background:#0e6b37"></div>
<div class="t" id="c_staff" style="left:165px;width:194px;text-align:center;top:356px;font-size:13px;color:#000;font-weight:bold;">Staff</div>
<div class="t" id="c_inv" style="left:424px;width:202px;text-align:center;top:356px;font-size:13px;color:#000;font-weight:bold;">Inventory</div>
<div class="t" style="left:167px;top:376px;font-size:13px;color:#000;">Number</div>
<div class="t" style="right:924px;top:376px;font-size:13px;color:#000;">3</div>
<div class="t" style="left:167px;top:396px;font-size:13px;color:#000;">Annual Cost</div>
<div class="t" style="right:924px;top:396px;font-size:13px;color:#000;">$309,000</div>
<div class="t" style="left:167px;top:416px;font-size:13px;color:#000;">Median Salary</div>
<div class="t" style="right:924px;top:416px;font-size:13px;color:#000;">$15,000</div>
<div class="t" style="left:426px;top:376px;font-size:13px;color:#000;">Unique Items</div>
<div class="t" style="right:656px;top:376px;font-size:13px;color:#000;">17</div>
<div class="t" style="left:426px;top:396px;font-size:13px;color:#000;">Quantity on Hand</div>
<div class="t" style="right:659px;top:396px;font-size:13px;color:#000;">7,553</div>
<div class="t" style="left:426px;top:416px;font-size:13px;color:#000;">Total Value</div>
<div class="t" style="right:656px;top:416px;font-size:13px;color:#000;">$132,009</div>

<!-- ============ SCROLLBARS ============ -->
<div class="a" style="left:1263px;top:252px;width:16px;height:637px;background:#f0f0f0"></div>
<div class="a" style="left:1265px;top:267px;width:11px;height:345px;background:#c1c1c1"></div>
<div class="a" style="left:37px;top:889px;width:1226px;height:15px;background:#f0f0f0"></div>
<div class="a" style="left:1263px;top:889px;width:16px;height:15px;background:#dadada"></div>
<div class="a" style="left:52px;top:891px;width:368px;height:11px;background:#c1c1c1"></div>
<svg style="left:0;top:0" width="1280" height="960" viewBox="0 0 1280 960">
<path d="M1266.7 262L1270.4 257.8L1274.1 262Z" fill="#a3a3a3"/>
<path d="M1266.7 878.8L1270.4 883L1274.1 878.8Z" fill="#505050"/>
<path d="M46.2 893L41.8 896.5L46.2 900Z" fill="#a3a3a3"/>
<path d="M1253.8 893L1258.2 896.5L1253.8 900Z" fill="#505050"/>
</svg>

<!-- ============ SHEET TABS ============ -->
<div class="a" style="left:0;top:904px;width:1279px;height:32px;background:#f3f3f3"></div>
<div class="a" style="left:0;top:889px;width:37px;height:15px;background:#f3f3f3"></div>
<div class="a" style="left:0;top:936px;width:1279px;height:1px;background:#e1dfdd"></div>
<svg style="left:0;top:900px" width="600" height="40" viewBox="0 900 600 40" fill="none">
<path d="M18 915.2L13 919.6L18 924" stroke="#c8c6c4" stroke-width="1"/>
<path d="M46 915.2L51 919.6L46 924" stroke="#c8c6c4" stroke-width="1"/>
<path d="M74 915.6H86.2M74 919.4H86.2M74 923.4H86.2" stroke="#323130" stroke-width="1.1"/>
<path d="M533.5 914.3V925M528 919.6H539" stroke="#c8c6c4" stroke-width="1"/>
</svg>
<div class="t" id="st_dash" style="left:106px;top:912px;font-size:14px;color:#323130;-webkit-text-stroke:0.5px #323130;letter-spacing:-0.2px">Dashboard</div>
<div class="a" style="left:105px;top:933px;width:68px;height:3px;background:#107c41"></div>
<div class="a" style="left:186px;top:907px;width:79px;height:26px;background:#2f5597;border-radius:2px"></div>
<div class="t" id="st_emp" style="left:193px;top:912px;font-size:14px;letter-spacing:-0.45px;color:#fff">Employees</div>
<div class="a" style="left:273px;top:907px;width:71px;height:26px;background:#548235;border-radius:2px"></div>
<div class="t" id="st_inv" style="left:279px;top:912px;font-size:14px;letter-spacing:0.15px;color:#fff">Inventory</div>
<div class="t" id="st_cat" style="left:358px;top:912px;font-size:14px;letter-spacing:-0.27px;color:#3b3a39">Categories</div>
<div class="t" id="st_sales" style="left:443px;top:912px;font-size:14px;letter-spacing:-0.35px;color:#3b3a39">Sales Data</div>

<!-- ============ STATUS ============ -->
<div class="t" id="sb1" style="left:32px;top:943px;font-size:11px;color:#424242">Workbook Statistics</div>
<div class="t" id="sb2" style="left:1024px;top:943px;font-size:11px;color:#424242">Give Feedback to Microsoft</div>
<div class="t" id="sb3" style="left:1217px;top:943px;font-size:11px;color:#424242">100%</div>
<svg style="left:0;top:930px" width="1280" height="30" viewBox="0 930 1280 30" fill="none">
<path d="M979 946.8L981.5 949.4L984 946.8" stroke="#424242" stroke-width="1.1"/>
<path d="M1197 948.5H1208" stroke="#424242" stroke-width="1.1"/>
<path d="M1256.5 943V954M1251 948.5H1262" stroke="#424242" stroke-width="1"/>
</svg>
<div class="a" style="left:1279px;top:0;width:1px;height:960px;background:#000"></div>
<div class="a" style="left:0;top:959px;width:1280px;height:1px;background:#000"></div>
</body></html>
